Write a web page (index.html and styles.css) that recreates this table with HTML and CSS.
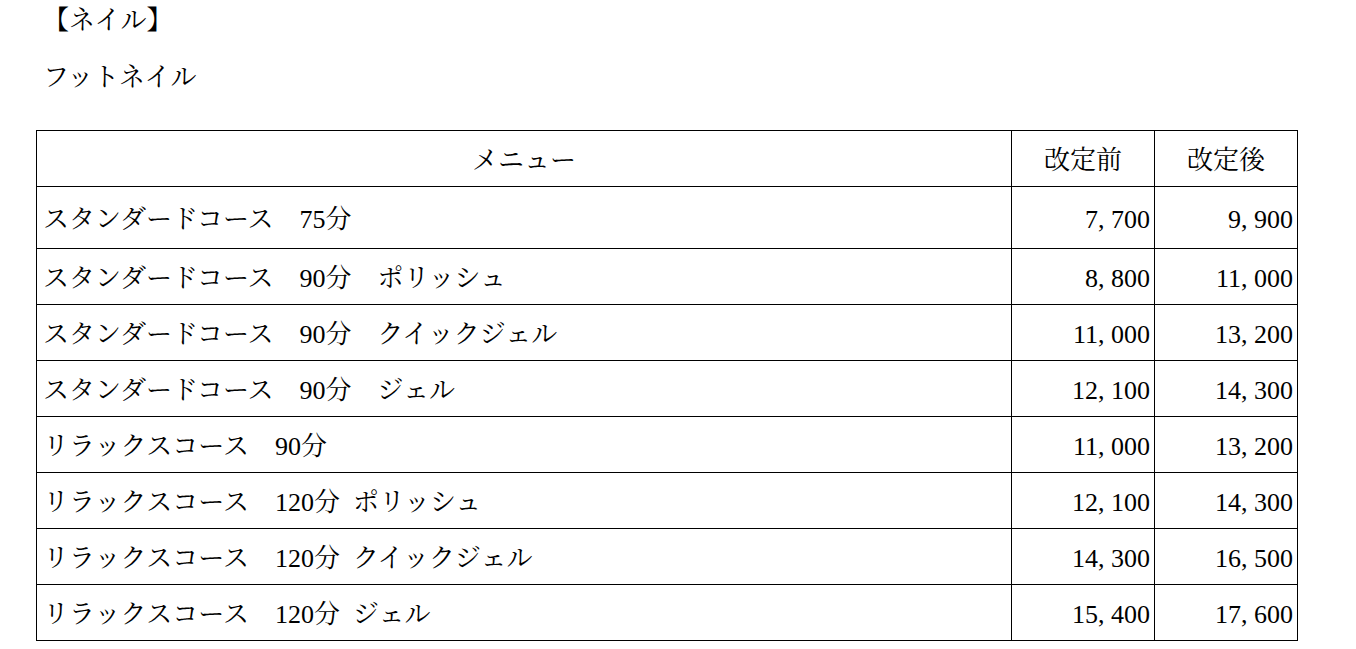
FILE: index.html
```html
<!DOCTYPE html>
<html lang="ja">
<head>
<meta charset="utf-8">
<title>ネイル</title>
<link rel="stylesheet" href="styles.css">
</head>
<body>
<div class="page">
  <p class="title">【ネイル】</p>
  <p class="subtitle">フットネイル</p>
  <table class="price-table">
    <colgroup>
      <col class="col-menu">
      <col class="col-price">
      <col class="col-price">
    </colgroup>
    <thead>
      <tr class="row-head">
        <th class="menu-head">メニュー</th>
        <th>改定前</th>
        <th>改定後</th>
      </tr>
    </thead>
    <tbody>
      <tr class="row-first"><td class="menu">スタンダードコース　75分</td><td class="num">7, 700</td><td class="num">9, 900</td></tr>
      <tr><td class="menu">スタンダードコース　90分　ポリッシュ</td><td class="num">8, 800</td><td class="num">11, 000</td></tr>
      <tr><td class="menu">スタンダードコース　90分　クイックジェル</td><td class="num">11, 000</td><td class="num">13, 200</td></tr>
      <tr><td class="menu">スタンダードコース　90分　ジェル</td><td class="num">12, 100</td><td class="num">14, 300</td></tr>
      <tr><td class="menu">リラックスコース　90分</td><td class="num">11, 000</td><td class="num">13, 200</td></tr>
      <tr><td class="menu">リラックスコース　120分&ensp;ポリッシュ</td><td class="num">12, 100</td><td class="num">14, 300</td></tr>
      <tr><td class="menu">リラックスコース　120分&ensp;クイックジェル</td><td class="num">14, 300</td><td class="num">16, 500</td></tr>
      <tr><td class="menu">リラックスコース　120分&ensp;ジェル</td><td class="num">15, 400</td><td class="num">17, 600</td></tr>
    </tbody>
  </table>
</div>
</body>
</html>
```
FILE: styles.css
```css
html, body {
  margin: 0;
  padding: 0;
  background: #ffffff;
}

body {
  font-family: "Liberation Serif", "Noto Serif CJK JP", "Noto Sans CJK JP", serif;
  font-size: 26px;
  color: #000000;
}

.page {
  padding: 1px 0 0 36px;
}

.title,
.subtitle {
  margin: 0;
  padding-left: 7px;
  line-height: 40px;
}

.subtitle {
  margin-top: 17px;
}

.price-table {
  margin-top: 32px;
  width: 1262px;
  border-collapse: collapse;
  table-layout: fixed;
}

.col-menu {
  width: 975px;
}

.col-price {
  width: 143px;
}

.price-table th,
.price-table td {
  border: 1px solid #000000;
  padding: 4px 0 0 0;
  font-weight: normal;
  line-height: 30px;
}

.price-table th {
  text-align: center;
}

.row-head,
.price-table tbody tr {
  height: 56px;
}

.price-table tbody tr.row-first {
  height: 62px;
}

.menu {
  padding-left: 6px !important;
  text-align: left;
}

.num {
  text-align: right;
  padding-right: 4px !important;
}
```
